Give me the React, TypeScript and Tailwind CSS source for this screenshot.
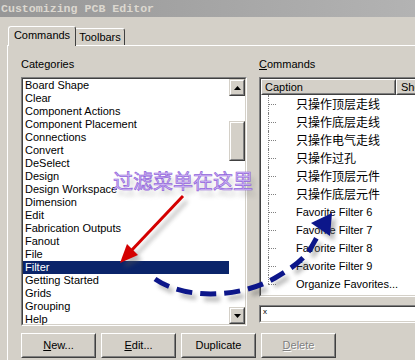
import React from "react";

const categories = [
  "Board Shape",
  "Clear",
  "Component Actions",
  "Component Placement",
  "Connections",
  "Convert",
  "DeSelect",
  "Design",
  "Design Workspace",
  "Dimension",
  "Edit",
  "Fabrication Outputs",
  "Fanout",
  "File",
  "Filter",
  "Getting Started",
  "Grids",
  "Grouping",
  "Help",
];

const commands = [
  { text: "只操作顶层走线", cjk: true },
  { text: "只操作底层走线", cjk: true },
  { text: "只操作电气走线", cjk: true },
  { text: "只操作过孔", cjk: true },
  { text: "只操作顶层元件", cjk: true },
  { text: "只操作底层元件", cjk: true },
  { text: "Favorite Filter 6", cjk: false },
  { text: "Favorite Filter 7", cjk: false },
  { text: "Favorite Filter 8", cjk: false },
  { text: "Favorite Filter 9", cjk: false },
  { text: "Organize Favorites...", cjk: false },
];

// classic 3d borders
const sunkenOuter = "border border-[#808080] border-r-white border-b-white";
const sunkenInner = "border border-[#404040] border-r-[#d4d0c8] border-b-[#d4d0c8]";
const raisedOuter = "border border-white border-r-[#404040] border-b-[#404040]";
const raisedInner = "border border-[#d4d0c8] border-r-[#808080] border-b-[#808080]";
const sbOuter = "border border-[#d4d0c8] border-r-[#404040] border-b-[#404040]";
const sbInner = "border border-white border-r-[#808080] border-b-[#808080]";

const ScrollButton = ({ down }: { down?: boolean }) => (
  <div className={`h-[17px] w-[16px] bg-[#d4d0c8] ${sbOuter}`}>
    <div className={`h-full w-full flex items-center justify-center ${sbInner}`}>
      <svg width="7" height="4" viewBox="0 0 7 4">
        {down ? <polygon points="0,0 7,0 3.5,4" fill="#000" /> : <polygon points="3.5,0 7,4 0,4" fill="#000" />}
      </svg>
    </div>
  </div>
);

const Button = ({ children, disabled }: { children: React.ReactNode; disabled?: boolean }) => (
  <div className={`w-[75px] h-[25px] bg-[#d4d0c8] ${raisedOuter}`}>
    <div
      className={`h-full w-full flex items-center justify-center ${raisedInner} ${
        disabled ? "text-[#808080] [text-shadow:1px_1px_0_#ffffff]" : "text-black"
      }`}
    >
      {children}
    </div>
  </div>
);

const Annotations = () => (
  <svg className="absolute inset-0 pointer-events-none" width="415" height="360" viewBox="0 0 415 360">
    <defs>
      <filter id="blur" x="-20%" y="-20%" width="140%" height="140%">
        <feGaussianBlur stdDeviation="2" />
      </filter>
    </defs>
    {/* shadows */}
    <g opacity="0.4" filter="url(#blur)" transform="translate(4,5)">
      <line x1="183" y1="196" x2="130" y2="252" stroke="#555" strokeWidth="3" />
      <polygon points="120,263 138,255 127,244" fill="#555" />
      <path d="M155 279 C 185 300, 240 298, 275 278 S 310 248, 320 232" fill="none" stroke="#555" strokeWidth="5" strokeDasharray="16 8" />
      <polygon points="332,213 330,236 311,223" fill="#555" />
      <text x="113" y="190" fontSize="20" fill="#888" fontFamily="'Noto Sans CJK SC', sans-serif">过滤菜单在这里</text>
    </g>
    {/* purple label */}
    <text
      x="113"
      y="189"
      fontSize="20"
      fill="#d3bdf6"
      stroke="#9366dc"
      strokeWidth="0.7"
      fontFamily="'Noto Sans CJK SC', sans-serif"
    >
      过滤菜单在这里
    </text>
    {/* red arrow */}
    <line x1="183" y1="196" x2="130" y2="252" stroke="#d40000" strokeWidth="3" />
    <polygon points="120,263 138,255 127,244" fill="#d40000" />
    {/* blue dashed arrow */}
    <path
      d="M155 279 C 185 300, 240 298, 275 278 S 310 248, 320 232"
      fill="none"
      stroke="#0c168a"
      strokeWidth="5"
      strokeDasharray="16 8"
    />
    <polygon points="332,213 330,236 311,223" fill="#0c168a" />
  </svg>
);

export default function App() {
  return (
    <div className="relative w-[415px] h-[360px] overflow-hidden bg-[#d4d0c8] flex flex-col font-['Liberation_Sans',Arial,sans-serif] text-[11px] text-black">
      {/* title bar */}
      <div className="h-[17px] shrink-0 bg-linear-to-r from-[#979797] to-[#b3b3b3] pl-[1px] leading-[17px] text-[11.6px] font-bold text-[#dcd8d0] font-['Liberation_Mono',monospace] whitespace-nowrap">
        Customizing PCB Editor
      </div>

      {/* tabs */}
      <div className="h-[28px] shrink-0 flex items-end pl-[8px]">
        <div className="relative z-10 -mb-px h-[20px] w-[68px] bg-[#d4d0c8] border-l border-t border-white border-r border-r-[#404040] rounded-t-[3px] flex justify-center pt-[2px] leading-[13px]">
          Commands
        </div>
        <div className="h-[17px] w-[49px] bg-[#d4d0c8] border-t border-white border-r border-r-[#404040] rounded-tr-[3px] flex justify-center pt-[2px] leading-[13px]">
          Toolbars
        </div>
      </div>

      {/* panel */}
      <div className="flex-1 ml-[7px] border-t border-l border-white pl-[13px] pt-[12px]">
        <div className="flex gap-[12px] h-[268px]">
          {/* categories */}
          <div className="w-[226px] shrink-0">
            <div className="h-[13px] leading-[13px]">Categories</div>
            <div className={`mt-[6px] h-[249px] bg-white ${sunkenOuter}`}>
              <div className={`h-full flex ${sunkenInner}`}>
                <div className="flex-1 flex flex-col">
                  {categories.map((c) => (
                    <div
                      key={c}
                      className={`h-[13px] leading-[13px] pl-[2px] whitespace-nowrap ${
                        c === "Filter" ? "bg-[#0a246a] text-white" : ""
                      }`}
                    >
                      {c}
                    </div>
                  ))}
                </div>
                <div className="w-[16px] flex flex-col">
                  <ScrollButton />
                  <div className="flex-1 bg-white">
                    <div className={`mt-[25px] h-[40px] w-[16px] bg-[#d4d0c8] ${sbOuter}`}>
                      <div className={`h-full w-full ${sbInner}`} />
                    </div>
                  </div>
                  <ScrollButton down />
                </div>
              </div>
            </div>
          </div>

          {/* commands */}
          <div className="w-[200px] shrink-0">
            <div className="h-[13px] leading-[13px]">
              <span className="underline">C</span>ommands
            </div>
            <div className={`mt-[6px] h-[220px] w-[200px] bg-white ${sunkenOuter}`}>
              <div className={`h-full flex flex-col ${sunkenInner}`}>
                <div className="h-[16px] flex shrink-0">
                  <div className={`w-[135px] h-full bg-[#d4d0c8] ${raisedOuter}`}>
                    <div className={`h-full pl-[2px] leading-[13px] ${raisedInner}`}>Caption</div>
                  </div>
                  <div className={`flex-1 h-full bg-[#d4d0c8] ${raisedOuter}`}>
                    <div className={`h-full pl-[3px] leading-[13px] ${raisedInner}`}>Shortcut</div>
                  </div>
                </div>
                {commands.map((c, i) => (
                  <div key={c.text} className="relative h-[18px] shrink-0 flex items-center pl-[35px] whitespace-nowrap">
                    <span
                      className={`absolute left-[7px] top-0 border-l border-dotted border-[#808080] ${
                        i === commands.length - 1 ? "h-[9px]" : "h-[18px]"
                      }`}
                    />
                    <span className="absolute left-[7px] top-[9px] w-[8px] border-t border-dotted border-[#808080]" />
                    <span
                      className={
                        c.cjk
                          ? "text-[12px] font-['Noto_Sans_CJK_SC',sans-serif] leading-[18px]"
                          : "text-[11px] leading-[18px]"
                      }
                    >
                      {c.text}
                    </span>
                  </div>
                ))}
              </div>
            </div>
            <div className={`mt-[8px] h-[18px] w-[200px] bg-white ${sunkenOuter}`}>
              <div className={`h-full pl-[2px] text-[8px] leading-[9px] ${sunkenInner}`}>x</div>
            </div>
          </div>
        </div>

        {/* buttons */}
        <div className="mt-[7px] flex gap-[5px]">
          <Button>
            <span>
              <span className="underline">N</span>ew...
            </span>
          </Button>
          <Button>
            <span>
              <span className="underline">E</span>dit...
            </span>
          </Button>
          <Button>Duplicate</Button>
          <Button disabled>
            <span>
              <span className="underline">D</span>elete
            </span>
          </Button>
        </div>
      </div>

      <Annotations />
    </div>
  );
}
